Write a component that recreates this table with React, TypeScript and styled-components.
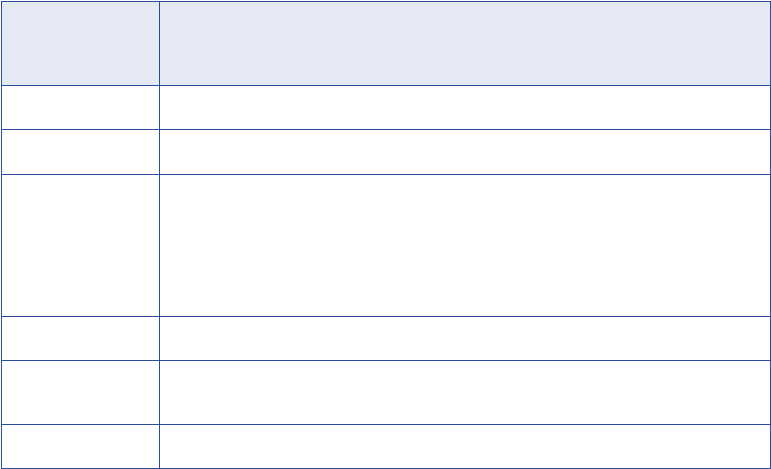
import React from "react";
import styled, { createGlobalStyle } from "styled-components";

const Global = createGlobalStyle`
  html, body { margin: 0; padding: 0; background: #ffffff; }
  body { font-family: "Liberation Sans", Arial, sans-serif; }
`;

const Page = styled.div`
  padding: 1px 0 0 1px;
`;

const Table = styled.div`
  display: grid;
  grid-template-columns: 157px 610px;
  gap: 1px;
  padding: 1px;
  width: 770px;
  box-sizing: border-box;
  background: #2b4d9f;
`;

const Cell = styled.div<{ $h: number; $head?: boolean }>`
  height: ${(p) => p.$h}px;
  background: ${(p) => (p.$head ? "#e4e9f4" : "#ffffff")};
  font-size: 13px;
  color: #222;
`;

const rows = [
  { h: 83, head: true },
  { h: 43 },
  { h: 44 },
  { h: 141 },
  { h: 43 },
  { h: 63 },
  { h: 43 },
];

export default function App() {
  return (
    <>
      <Global />
      <Page>
        <Table>
          {rows.map((r, i) => (
            <React.Fragment key={i}>
              <Cell $h={r.h} $head={r.head} />
              <Cell $h={r.h} $head={r.head} />
            </React.Fragment>
          ))}
        </Table>
      </Page>
    </>
  );
}
